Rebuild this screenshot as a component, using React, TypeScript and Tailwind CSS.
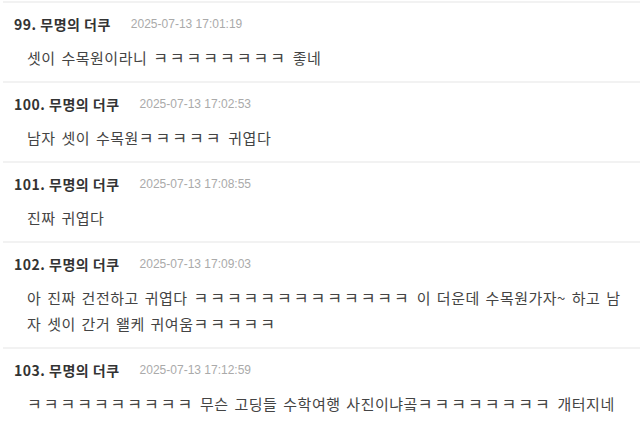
import React from 'react';

interface Comment {
  no: number;
  date: string;
  body: string;
}

const comments: Comment[] = [
  { no: 99, date: '2025-07-13 17:01:19', body: '셋이 수목원이라니 ㅋㅋㅋㅋㅋㅋㅋㅋ 좋네' },
  { no: 100, date: '2025-07-13 17:02:53', body: '남자 셋이 수목원ㅋㅋㅋㅋㅋ 귀엽다' },
  { no: 101, date: '2025-07-13 17:08:55', body: '진짜 귀엽다' },
  {
    no: 102,
    date: '2025-07-13 17:09:03',
    body: '아 진짜 건전하고 귀엽다 ㅋㅋㅋㅋㅋㅋㅋㅋㅋㅋㅋㅋㅋ 이 더운데 수목원가자~ 하고 남자 셋이 간거 왤케 귀여움ㅋㅋㅋㅋㅋ',
  },
  {
    no: 103,
    date: '2025-07-13 17:12:59',
    body: 'ㅋㅋㅋㅋㅋㅋㅋㅋㅋㅋ 무슨 고딩들 수학여행 사진이냐곸ㅋㅋㅋㅋㅋㅋㅋㅋ 개터지네',
  },
];

// the jamo ㅋ is narrower in Noto than in the original font, so widen it a bit
function Body({ text }: { text: string }) {
  const parts = text.split(/(ㅋ+)/);
  return (
    <>
      {parts.map((p, i) =>
        p.startsWith('ㅋ') ? (
          <span key={i} className="text-[16px] leading-none tracking-[2px]">
            {p}
          </span>
        ) : (
          <React.Fragment key={i}>{p}</React.Fragment>
        )
      )}
    </>
  );
}

export default function App() {
  return (
    <div
      className="w-[640px] h-[427px] overflow-hidden bg-white pt-px"
      style={{ fontFamily: '"Noto Sans CJK KR", "Noto Sans", sans-serif' }}
    >
      <ul className="ml-[3px]">
        {comments.map((c) => (
          <li key={c.no} className="border-t-2 border-[#f2f2f2] pt-[11px] pb-[10px]">
            <div className="flex items-center h-5 pl-[11px]">
              <span className="text-[14px] font-bold tracking-[0.5px] text-[#333]">
                {c.no}. 무명의 더쿠
              </span>
              <span
                className="ml-5 text-[12px] text-[#aaaaaa]"
                style={{ fontFamily: '"Liberation Sans", sans-serif' }}
              >
                {c.date}
              </span>
            </div>
            <p
              className="mt-[11px] pl-6 pr-3 text-[15px] tracking-[0.5px] leading-[26px] text-[#444]"
              style={{ wordSpacing: '2px' }}
            >
              <Body text={c.body} />
            </p>
          </li>
        ))}
      </ul>
    </div>
  );
}
